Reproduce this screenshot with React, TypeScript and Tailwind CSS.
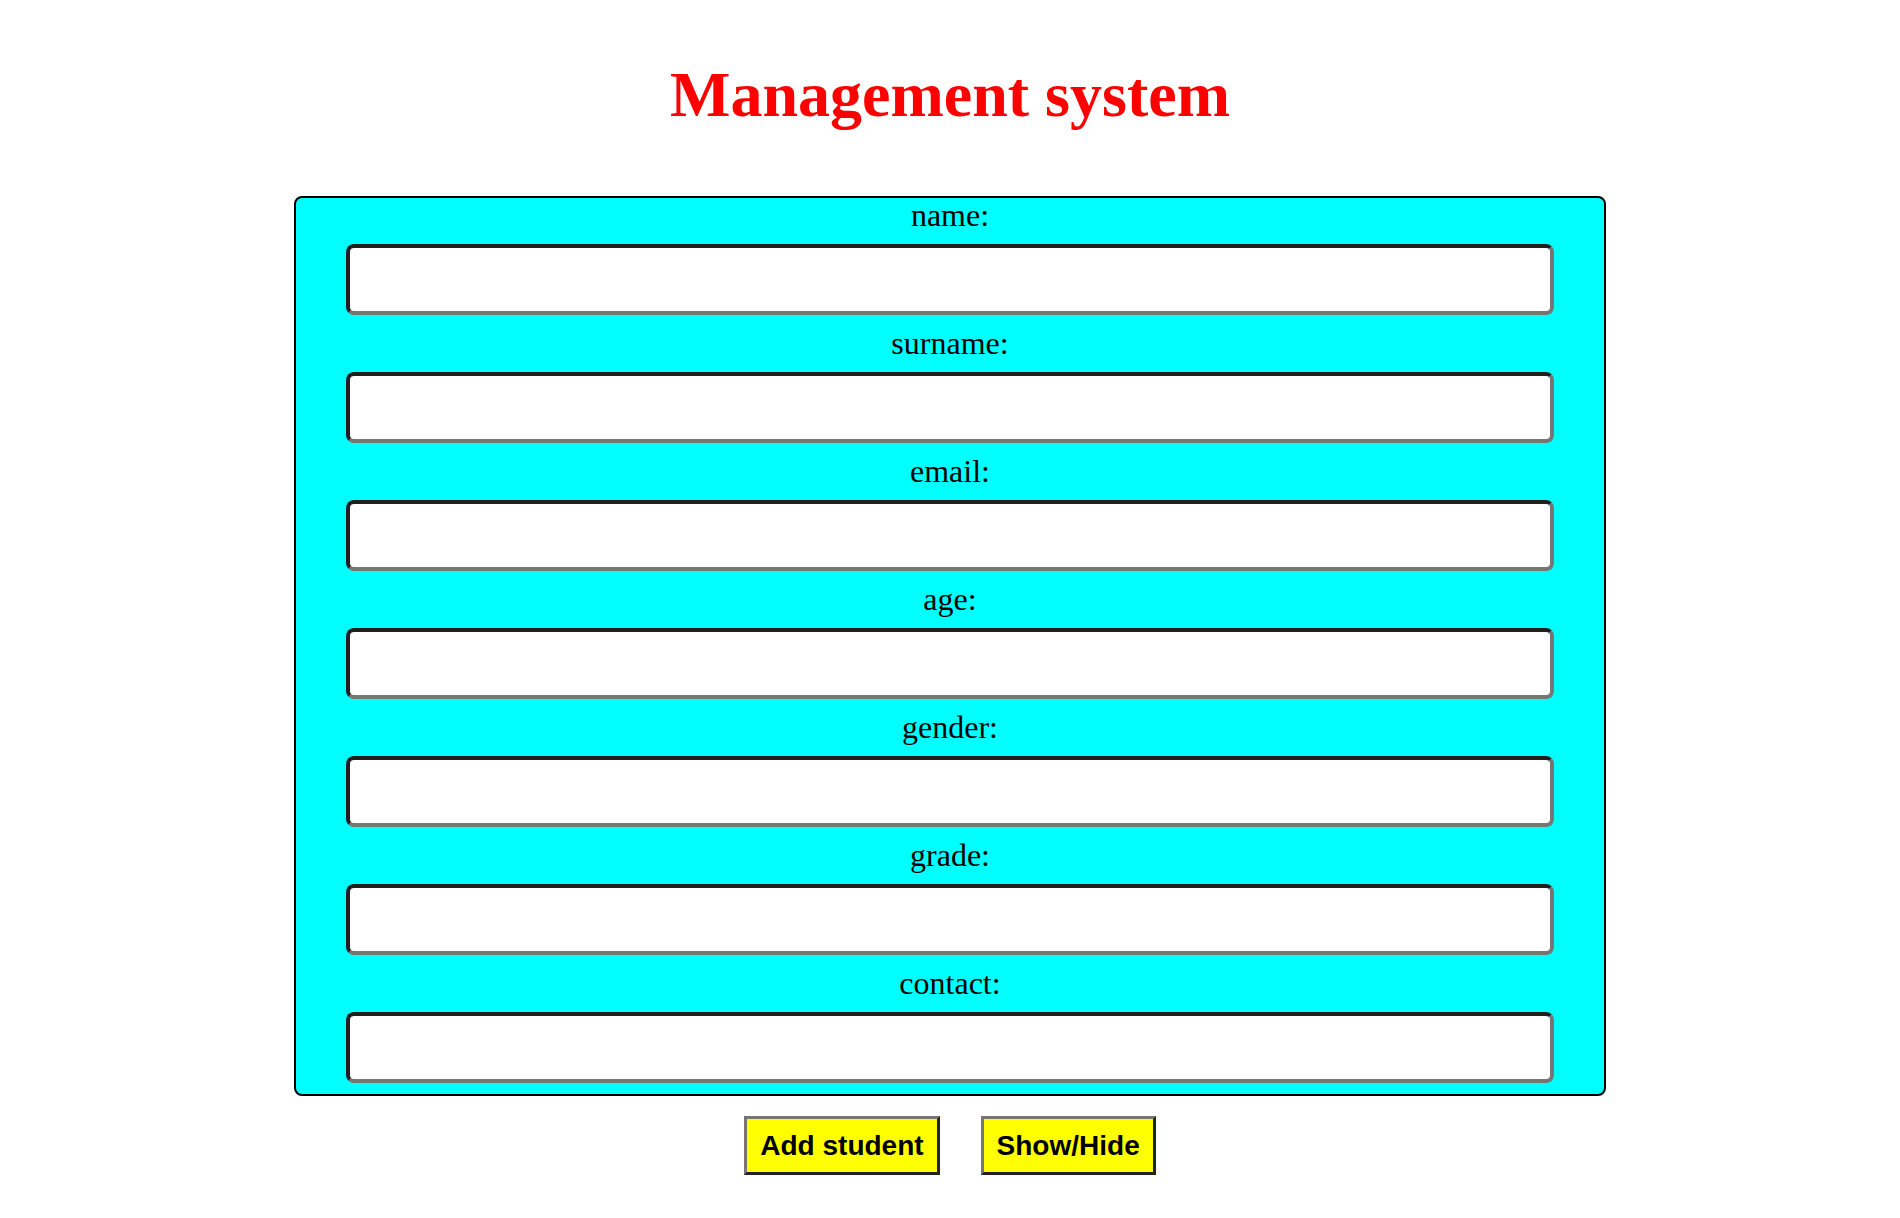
import { useState } from "react";

const FIELDS = ["name", "surname", "email", "age", "gender", "grade", "contact"];

export default function App() {
  const [values, setValues] = useState<Record<string, string>>({});
  const [visible, setVisible] = useState(true);

  return (
    <div className="min-h-screen bg-white pt-[58px] font-['Liberation_Serif',serif]">
      <h1 className="text-center text-[64px] font-bold leading-[73px] text-[#ff0000]">
        Management system
      </h1>

      <form
        onSubmit={(e) => e.preventDefault()}
        className="mx-auto mt-[65px] w-[1312px] rounded-[8px] border-2 border-black bg-[#00ffff]"
      >
        {FIELDS.map((f) => (
          <div key={f} className={visible ? "" : "hidden"}>
            <label
              htmlFor={f}
              className="block h-[36px] text-center text-[32px] leading-[34px] text-black"
            >
              {f}:
            </label>
            <input
              id={f}
              type="text"
              value={values[f] ?? ""}
              onChange={(e) => setValues({ ...values, [f]: e.target.value })}
              className="mx-auto mb-[11px] mt-[10px] block h-[71px] w-[1208px] rounded-[8px] border-4 border-b-[#767676] border-l-[#1f1f1f] border-r-[#767676] border-t-[#1f1f1f] bg-white px-2 text-[20px] outline-none"
            />
          </div>
        ))}
      </form>

      <div className="mt-[20px] flex justify-center gap-[41px] font-['Liberation_Sans',Arial,sans-serif]">
        <button
          type="button"
          className="h-[59px] border-[3px] border-b-[#222] border-l-[#767676] border-r-[#222] border-t-[#767676] bg-[#ffff00] px-[13px] text-[28px] font-bold text-black"
        >
          Add student
        </button>
        <button
          type="button"
          onClick={() => setVisible(!visible)}
          className="h-[59px] border-[3px] border-b-[#222] border-l-[#767676] border-r-[#222] border-t-[#767676] bg-[#ffff00] px-[13px] text-[28px] font-bold text-black"
        >
          Show/Hide
        </button>
      </div>
    </div>
  );
}
